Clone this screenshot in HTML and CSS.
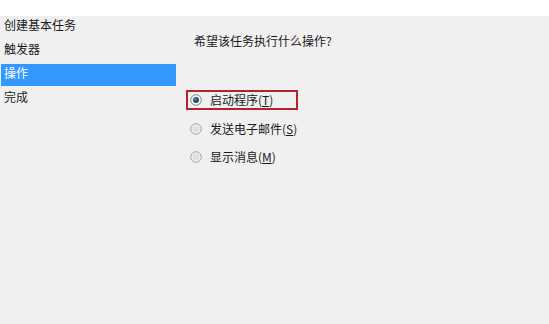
FILE: index.html
```html
<!DOCTYPE html>
<html lang="zh-CN">
<head>
<meta charset="utf-8">
<link rel="stylesheet" href="styles.css">
</head>
<body>
<div class="top"></div>
<div class="main">
  <ul class="side">
    <li class="item">创建基本任务</li>
    <li class="item">触发器</li>
    <li class="item active">操作</li>
    <li class="item">完成</li>
  </ul>
  <div class="content">
    <div class="heading">希望该任务执行什么操作?</div>
    <div class="options">
      <div class="opt focused">
        <svg class="radio" width="12" height="12" viewBox="0 0 12 12"><circle cx="6" cy="6" r="5.3" fill="#f4f4f4" stroke="#8a8a8a" stroke-width="1"/><circle cx="6" cy="6" r="3" fill="#2f4a5c"/><circle cx="5.4" cy="5.3" r="1.2" fill="#6a90a8"/></svg>
        <span>启动程序(<u>T</u>)</span>
      </div>
      <div class="opt">
        <svg class="radio" width="12" height="12" viewBox="0 0 12 12"><circle cx="6" cy="6" r="5.3" fill="#ececec" stroke="#a8a8a8" stroke-width="1"/><circle cx="6" cy="6" r="3.3" fill="#e0e0e0"/></svg>
        <span>发送电子邮件(<u>S</u>)</span>
      </div>
      <div class="opt">
        <svg class="radio" width="12" height="12" viewBox="0 0 12 12"><circle cx="6" cy="6" r="5.3" fill="#ececec" stroke="#a8a8a8" stroke-width="1"/><circle cx="6" cy="6" r="3.3" fill="#e0e0e0"/></svg>
        <span>显示消息(<u>M</u>)</span>
      </div>
    </div>
  </div>
</div>
</body>
</html>
```
FILE: styles.css
```css
html, body {
  margin: 0;
  padding: 0;
  background: #f0f0f0;
  font-family: "Noto Sans CJK SC", "Liberation Sans", sans-serif;
  font-size: 12px;
  color: #1a1a1a;
}
.top {
  height: 16px;
  background: #ffffff;
}
.main {
  display: flex;
  height: 308px;
}
.side {
  list-style: none;
  margin: 0;
  padding: 0 0 0 1px;
  width: 175px;
  display: flex;
  flex-direction: column;
  gap: 2px;
}
.item {
  height: 18px;
  line-height: 18px;
  padding: 0 0 4px 3px;
  white-space: nowrap;
}
.item.active {
  background: #3399ff;
  color: #ffffff;
}
.content {
  padding-left: 10px;
  display: flex;
  flex-direction: column;
}
.heading {
  margin: 16px 0 0 8px;
  line-height: 18px;
}
.options {
  margin-top: 40px;
  display: flex;
  flex-direction: column;
  gap: 8.5px;
}
.opt {
  box-sizing: border-box;
  width: 112px;
  height: 20px;
  border: 2px solid transparent;
  display: flex;
  align-items: center;
  padding-left: 2px;
  white-space: nowrap;
}
.opt.focused {
  border-color: #b5222e;
}
.radio {
  flex: none;
  margin-right: 8px;
}
.opt span {
  line-height: 16px;
}
.opt u {
  text-underline-offset: 1px;
}
```
